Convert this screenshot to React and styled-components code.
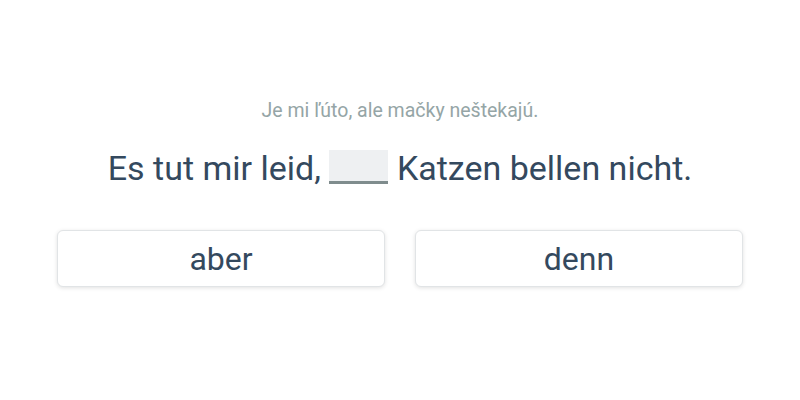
import React from "react";
import styled, { createGlobalStyle } from "styled-components";

const GlobalStyle = createGlobalStyle`
  html, body {
    margin: 0;
    padding: 0;
    background: #fff;
  }
  body {
    font-family: Roboto, "Liberation Sans", sans-serif;
  }
`;

const Page = styled.div`
  width: 800px;
  height: 400px;
  box-sizing: border-box;
  padding-top: 98px;
  display: flex;
  flex-direction: column;
  align-items: center;
`;

const Hint = styled.div`
  font-size: 19.5px;
  line-height: 26px;
  color: #95a5a6;
`;

const Sentence = styled.div`
  margin-top: 23px;
  font-size: 34px;
  line-height: 42px;
  color: #34495e;
  display: flex;
  align-items: center;
  white-space: pre;
`;

const Blank = styled.span`
  display: inline-block;
  width: 59px;
  height: 31px;
  background: #eef0f2;
  border-bottom: 3px solid #7f8c8d;
  margin: 0 9px 0 8px;
  position: relative;
  top: -1px;
`;

const Choices = styled.div`
  margin-top: 41px;
  width: 100%;
  box-sizing: border-box;
  padding: 0 57px;
  display: grid;
  grid-template-columns: 1fr 1fr;
  gap: 30px;
`;

const Choice = styled.button`
  height: 57px;
  background: #fff;
  border: 1px solid #e1e4e6;
  border-radius: 6px;
  box-shadow: 0 1px 4px rgba(0, 0, 0, 0.12);
  font-family: Roboto, "Liberation Sans", sans-serif;
  font-size: 32px;
  color: #34495e;
  cursor: pointer;
`;

export default function App() {
  return (
    <>
      <GlobalStyle />
      <Page>
        <Hint>Je mi ľúto, ale mačky neštekajú.</Hint>
        <Sentence>
          Es tut mir leid,
          <Blank />
          Katzen bellen nicht.
        </Sentence>
        <Choices>
          <Choice>aber</Choice>
          <Choice>denn</Choice>
        </Choices>
      </Page>
    </>
  );
}
